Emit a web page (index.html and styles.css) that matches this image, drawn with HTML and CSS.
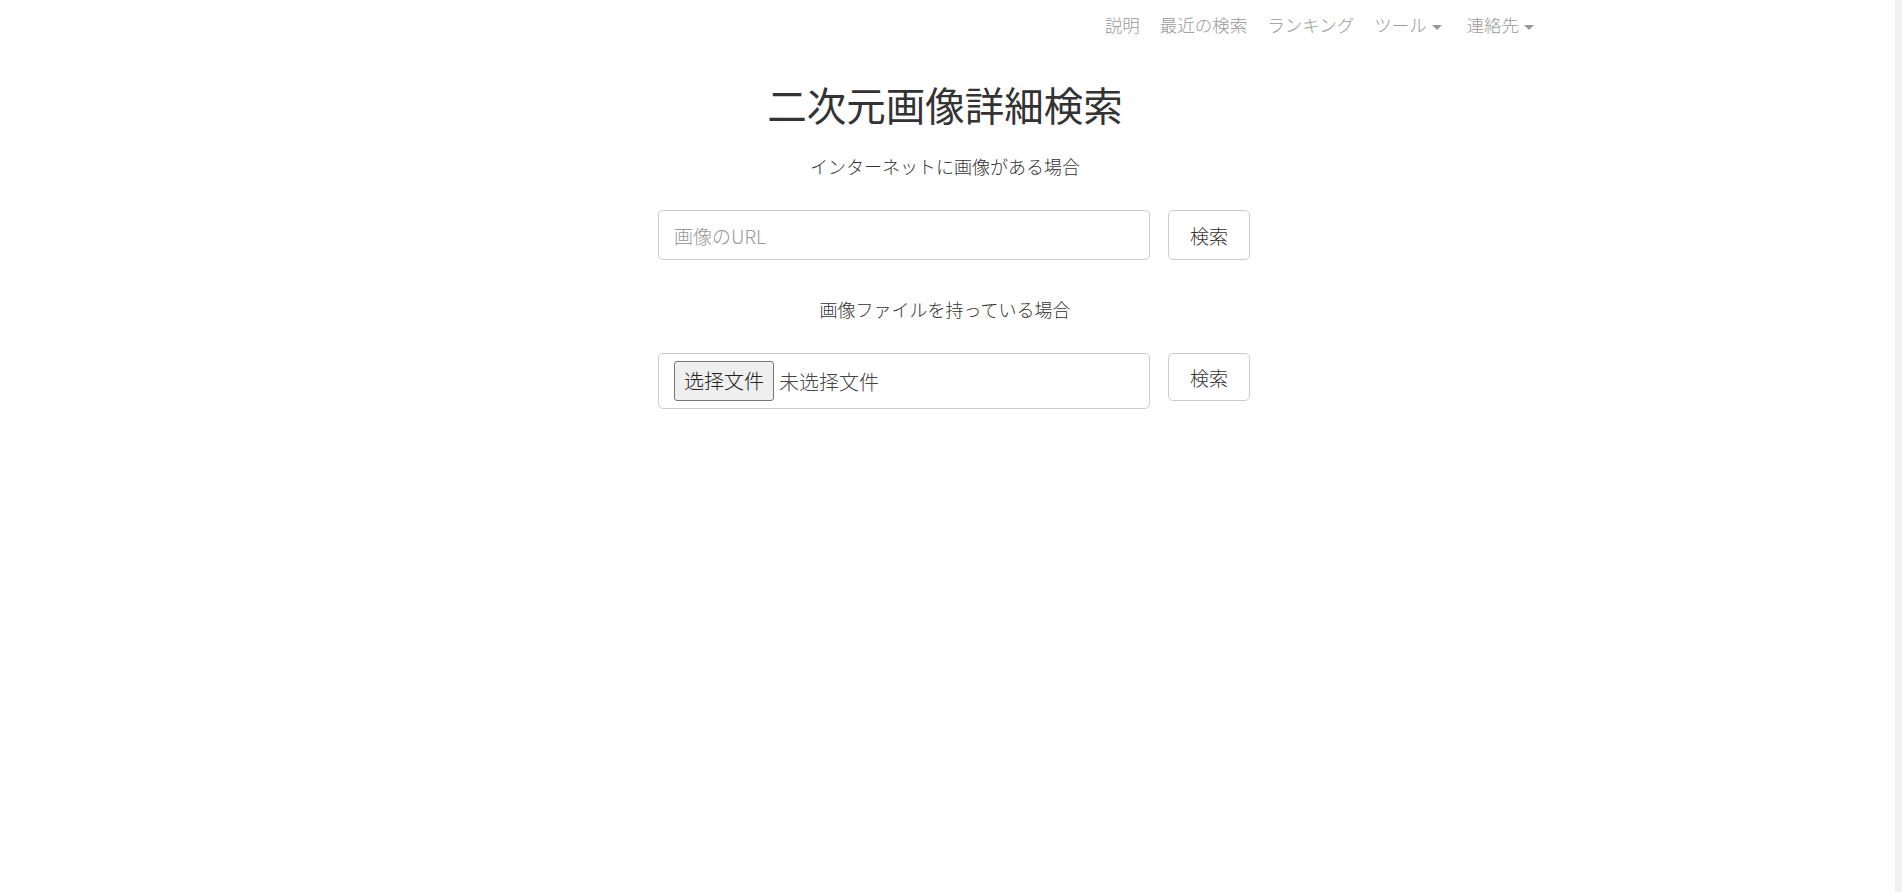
FILE: index.html
```html
<!DOCTYPE html>
<html lang="ja">
<head>
  <meta charset="UTF-8" />
  <meta name="viewport" content="width=device-width, initial-scale=1.0" />
  <title>二次元画像詳細検索</title>
  <link rel="stylesheet" href="styles.css">
</head>
<body>
  <nav class="navbar">
    <div class="container nav-inner">
      <ul class="nav-links">
        <li><a href="#">説明</a></li>
        <li><a href="#">最近の検索</a></li>
        <li><a href="#">ランキング</a></li>
        <li class="dropdown"><a href="#">ツール <span class="caret"></span></a></li>
        <li class="dropdown"><a href="#">連絡先 <span class="caret"></span></a></li>
      </ul>
    </div>
  </nav>

  <div class="container main">
    <h1>二次元画像詳細検索</h1>

    <p class="label first">インターネットに画像がある場合</p>
    <form class="search-row" onsubmit="return false;">
      <input type="text" class="form-control url-input" placeholder="画像のURL">
      <button class="btn" type="submit">検索</button>
    </form>

    <p class="label second">画像ファイルを持っている場合</p>
    <form class="search-row" onsubmit="return false;">
      <label class="form-control file-box">
        <input type="file" class="file-hidden">
        <span class="file-btn">选择文件</span>
        <span class="file-name">未选择文件</span>
      </label>
      <button class="btn btn-file" type="submit">検索</button>
    </form>
  </div>
</body>
</html>
```

FILE: styles.css
```css
body {
  margin: 0;
  padding: 0 5px 0 0;
  min-height: 100vh;
  box-sizing: border-box;
  border-right: 7px solid #f1f1f1; /* scrollbar track of the original window */
  background: #fff;
  color: #333;
  font-family: "Noto Sans CJK JP", "Noto Sans", sans-serif;
  font-size: 18px;
}

.container {
  width: 1170px;
  margin: 0 auto;
  box-sizing: border-box;
}

/* top navigation */
.navbar {
  height: 50px;
}

.nav-inner {
  display: flex;
  justify-content: flex-end;
}

.nav-links {
  display: flex;
  list-style: none;
  margin: 0 -14px 0 0;
  padding: 0;
}

.nav-links a {
  display: block;
  padding: 15px 10px 15px;
  line-height: 20px;
  font-size: 17.5px;
  font-weight: 300;
  color: #999;
  text-decoration: none;
}

.nav-links .dropdown a {
  padding-right: 15px;
}

.nav-links .dropdown:last-child a {
  padding-right: 10px;
}

.caret {
  display: inline-block;
  width: 0;
  height: 0;
  margin-left: 1px;
  vertical-align: middle;
  border-top: 5px solid #999;
  border-left: 5px solid transparent;
  border-right: 5px solid transparent;
}

/* main content */
.main {
  text-align: center;
}

h1 {
  margin: 32px 0 0;
  font-size: 39.5px;
  line-height: 43px;
  font-weight: 400;
  color: #333;
}

.label {
  margin: 0;
  font-size: 18px;
  line-height: 27px;
  font-weight: 300;
}

.label.first {
  margin-top: 28px;
}

.label.second {
  margin-top: 36px;
}

.search-row {
  display: flex;
  justify-content: center;
  align-items: flex-start;
  gap: 18px;
  padding-left: 18px;
  margin: 30px 0 0;
}

.form-control {
  width: 492px;
  box-sizing: border-box;
  border: 1px solid #ccc;
  border-radius: 5px;
  background: #fff;
  font-family: inherit;
  font-size: 19px;
  color: #333;
}

.url-input {
  height: 50px;
  padding: 0 15px;
  font-weight: 300;
  outline: none;
}

.url-input::placeholder {
  color: #999;
}

.btn {
  width: 82px;
  height: 50px;
  box-sizing: border-box;
  border: 1px solid #ccc;
  border-radius: 5px;
  background: #fff;
  color: #333;
  font-family: inherit;
  font-size: 19px;
  font-weight: 300;
  cursor: pointer;
}

.btn-file {
  height: 48px;
}

.file-box {
  display: flex;
  align-items: center;
  height: 56px;
  padding: 0 15px;
  text-align: left;
  cursor: pointer;
}

.file-hidden {
  display: none;
}

.file-btn {
  display: inline-block;
  height: 40px;
  line-height: 38px;
  box-sizing: border-box;
  padding: 0 9px;
  border: 1px solid #767676;
  border-radius: 3px;
  background: #efefef;
  color: #222;
  font-family: "Noto Sans CJK SC", sans-serif;
  font-size: 20px;
  font-weight: 300;
}

.file-name {
  margin-left: 5px;
  color: #444;
  font-family: "Noto Sans CJK SC", sans-serif;
  font-size: 20px;
  font-weight: 300;
}
```
